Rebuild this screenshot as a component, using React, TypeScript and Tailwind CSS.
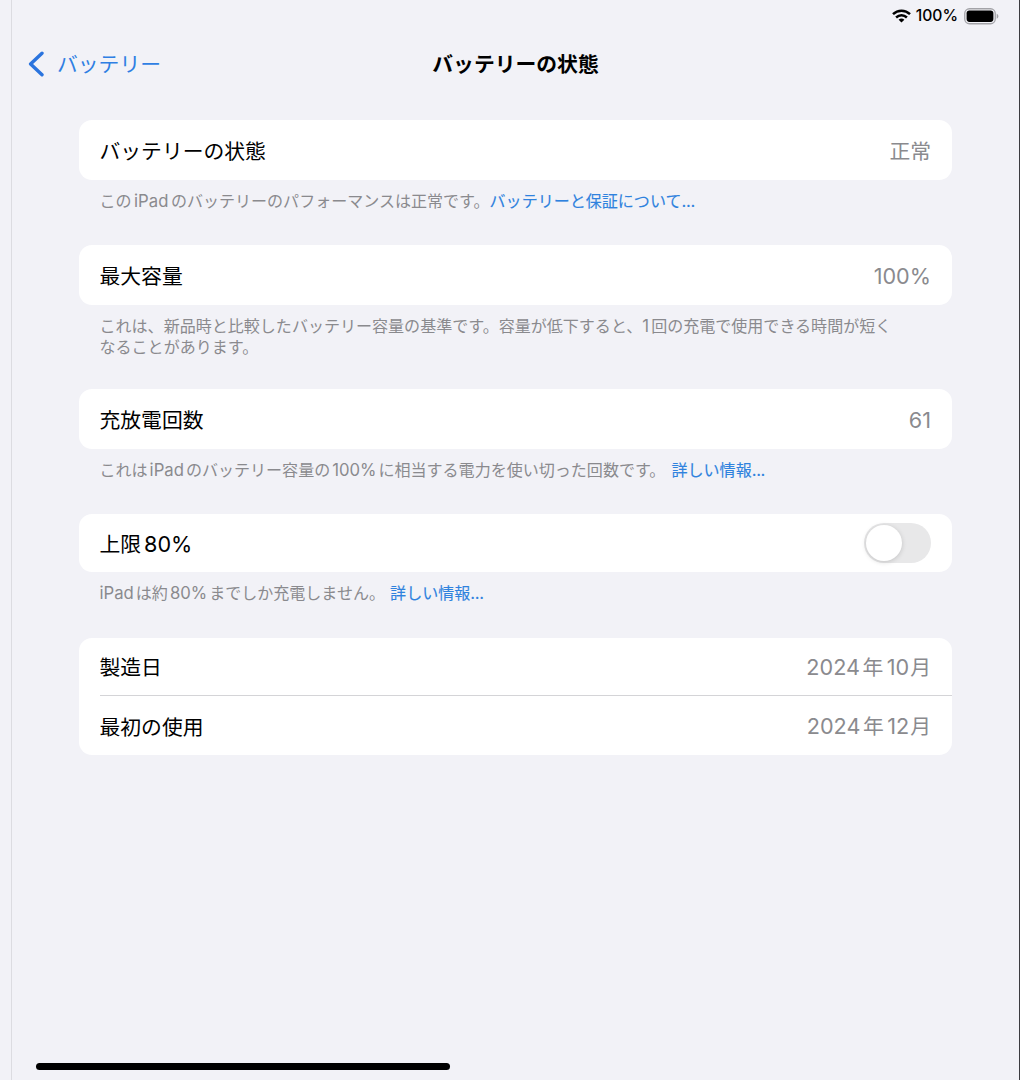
import { useState, type ReactNode } from "react"
import clsx from "clsx"

function Latin({ children, className }: { children: ReactNode; className?: string }) {
  return (
    <span className={clsx("font-['Inter',sans-serif] text-[1.04em]", className)}>
      {children}
    </span>
  )
}

function Link({ children, className }: { children: ReactNode; className?: string }) {
  return (
    <a href="#" className={clsx("text-[#2f82de] [-webkit-text-stroke:0.12px_currentColor]", className)}>
      {children}
      <Latin className="tracking-[-0.02em]">...</Latin>
    </a>
  )
}

function Row({ label, children, className }: { label: ReactNode; children: ReactNode; className?: string }) {
  return (
    <div className={clsx("flex items-center justify-between pr-[21px]", className)}>
      <span className="text-black">{label}</span>
      <span className="text-[#8a8a8e]">{children}</span>
    </div>
  )
}

function Card({ children }: { children: ReactNode }) {
  return <div className="rounded-[13px] bg-white pl-[20.5px] text-[20.8px] leading-[30px]">{children}</div>
}

function Footer({ children }: { children: ReactNode }) {
  return <p className="px-[20.5px] pt-[10px] text-[16.05px] leading-[20.8px] whitespace-nowrap text-[#8a8a8e]">{children}</p>
}

function Toggle() {
  const [on, setOn] = useState(false)
  return (
    <button
      role="switch"
      aria-checked={on}
      onClick={() => setOn(!on)}
      className={clsx("flex h-10 w-[67px] items-center rounded-full px-[2px]", on ? "justify-end bg-[#34c759]" : "bg-[#e8e8e9]")}
    >
      <span className="size-9 rounded-full bg-white shadow-[0_1px_5px_rgba(0,0,0,0.16)]" />
    </button>
  )
}

function StatusBar() {
  return (
    <div className="flex h-8 items-center justify-end pr-5 text-black">
      <svg width="19" height="14" viewBox="0 0 19 14" fill="none" stroke="currentColor" strokeWidth="2.5">
        <path d="M1 5.1C5.8.5 13.2.5 18 5.1" />
        <path d="M4.1 8.5c3.1-2.9 7.7-2.9 10.8 0" />
        <path d="M9.5 13.6 6.6 10.7c1.7-1.5 4.1-1.5 5.8 0z" fill="currentColor" stroke="none" />
      </svg>
      <span className="mr-[6px] ml-[5px] font-['Inter',sans-serif] text-[15.7px] font-medium">100%</span>
      <svg width="35" height="17" viewBox="0 0 35 17">
        <rect x="0.75" y="0.75" width="30.5" height="15" rx="4.7" fill="none" stroke="#a3a3a8" strokeWidth="1.3" />
        <rect x="2.6" y="2.6" width="26.8" height="11.3" rx="2.8" fill="currentColor" />
        <path d="M32.7 5.8v4.9c1.1-.5 1.7-1.4 1.7-2.45s-.6-1.95-1.7-2.45z" fill="#a3a3a8" />
      </svg>
    </div>
  )
}

export default function App() {
  return (
    <div
      lang="ja"
      className="flex h-[1080px] w-[1020px] bg-[#f2f2f7] pl-[11px] font-['Noto_Sans_CJK_JP',sans-serif] [text-autospace:no-autospace]"
    >
      <div className="flex flex-1 flex-col border-r border-l border-r-[#3c3c40] border-l-[#dcdce1]">
        <StatusBar />

        <header className="grid h-[88.4px] grid-cols-[1fr_auto_1fr] items-start pt-4 text-[20.8px] leading-[30px]">
          <button className="flex items-center text-[#2f7fe3]">
            <svg width="16" height="26" viewBox="0 0 16 26" className="relative top-px ml-4" fill="none" stroke="#2b74de" strokeWidth="3.4" strokeLinecap="round" strokeLinejoin="round">
              <path d="M14 2.2 2.6 13 14 23.8" />
            </svg>
            <span className="ml-[13px]">バッテリー</span>
          </button>
          <h1 className="font-bold text-black">バッテリーの状態</h1>
        </header>

        <main className="flex flex-1 flex-col px-[67px]">
          <section className="h-[125px]">
            <Card>
              <Row label="バッテリーの状態" className="h-[59.3px]">正常</Row>
            </Card>
            <Footer>
              この<Latin className="mx-[2.5px]">iPad</Latin>のバッテリーのパフォーマンスは正常です。<Link>バッテリーと保証について</Link>
            </Footer>
          </section>

          <section className="h-[144px]">
            <Card>
              <Row label="最大容量" className="h-[59.3px]"><Latin>100%</Latin></Row>
            </Card>
            <Footer>
              これは、新品時と比較したバッテリー容量の基準です。容量が低下すると、<Latin className="mr-[2px]">1</Latin>回の充電で使用できる時間が短く
              <br />
              なることがあります。
            </Footer>
          </section>

          <section className="h-[124.5px]">
            <Card>
              <Row label="充放電回数" className="h-[59.3px]"><Latin>61</Latin></Row>
            </Card>
            <Footer>
              これは<Latin className="mx-[2px]">iPad</Latin>のバッテリー容量の<Latin className="mx-[2px]">100%</Latin>に相当する電力を使い切った回数です。 <Link className="ml-[2.5px]">詳しい情報</Link>
            </Footer>
          </section>

          <section className="h-[124px]">
            <Card>
              <Row label={<>上限<Latin className="ml-[3px]">80%</Latin></>} className="h-[58.3px]">
                <Toggle />
              </Row>
            </Card>
            <Footer>
              <Latin className="mr-[2px]">iPad</Latin>は約<Latin className="mx-[2px]">80%</Latin>までしか充電しません。 <Link className="ml-[1.5px]">詳しい情報</Link>
            </Footer>
          </section>

          <section>
            <Card>
              <Row label="製造日" className="h-[58px] border-b border-[#d4d4d7]">
                <Latin>2024</Latin><span className="mr-[3.5px] ml-[2.5px]">年</span><Latin className="mr-[1px]">10</Latin>月
              </Row>
              <Row label="最初の使用" className="h-[59.5px]">
                <Latin>2024</Latin><span className="mr-[3.5px] ml-[2.5px]">年</span><Latin className="mr-[1px]">12</Latin>月
              </Row>
            </Card>
          </section>
        </main>

        <div className="mb-[10px] ml-6 h-[7px] w-[414px] rounded-full bg-black" />
      </div>
    </div>
  )
}
